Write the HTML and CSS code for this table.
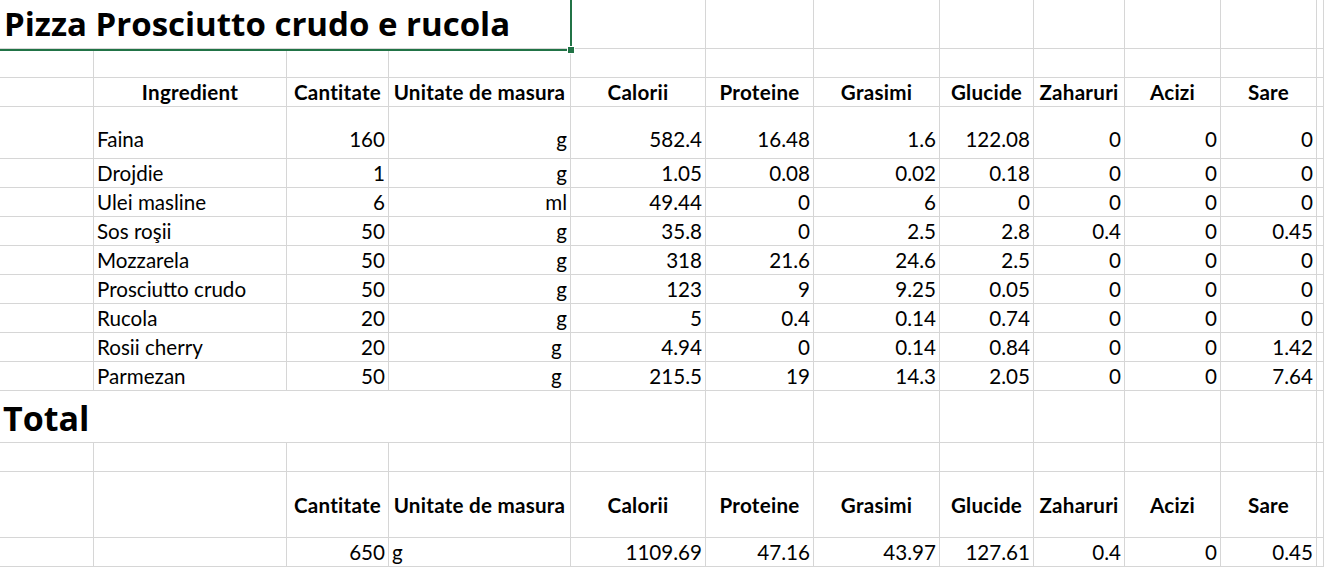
FILE: index.html
```html
<!DOCTYPE html>
<html lang="ro">
<head>
<meta charset="utf-8">
<title>Pizza Prosciutto crudo e rucola</title>
<link rel="stylesheet" href="styles.css">
</head>
<body>
<div class="sheet">
  <div class="row title-row">
    <div class="c span4 title">Pizza Prosciutto crudo e rucola</div>
    <div class="c"></div><div class="c"></div><div class="c"></div><div class="c"></div>
    <div class="c"></div><div class="c"></div><div class="c"></div><div class="c"></div>
  </div>
  <div class="row">
    <div class="c"></div><div class="c"></div><div class="c"></div><div class="c"></div>
    <div class="c"></div><div class="c"></div><div class="c"></div><div class="c"></div>
    <div class="c"></div><div class="c"></div><div class="c"></div><div class="c"></div>
  </div>
  <div class="row head">
    <div class="c"></div>
    <div class="c m">Ingredient</div>
    <div class="c m">Cantitate</div>
    <div class="c m">Unitate de masura</div>
    <div class="c m">Calorii</div>
    <div class="c m">Proteine</div>
    <div class="c m">Grasimi</div>
    <div class="c m">Glucide</div>
    <div class="c m">Zaharuri</div>
    <div class="c m">Acizi</div>
    <div class="c m">Sare</div>
    <div class="c"></div>
  </div>
  <div class="row tall">
    <div class="c"></div><div class="c">Faina</div><div class="c r">160</div><div class="c r">g</div>
    <div class="c r">582.4</div><div class="c r">16.48</div><div class="c r">1.6</div><div class="c r">122.08</div>
    <div class="c r">0</div><div class="c r">0</div><div class="c r">0</div><div class="c"></div>
  </div>
  <div class="row">
    <div class="c"></div><div class="c">Drojdie</div><div class="c r">1</div><div class="c r">g</div>
    <div class="c r">1.05</div><div class="c r">0.08</div><div class="c r">0.02</div><div class="c r">0.18</div>
    <div class="c r">0</div><div class="c r">0</div><div class="c r">0</div><div class="c"></div>
  </div>
  <div class="row">
    <div class="c"></div><div class="c">Ulei masline</div><div class="c r">6</div><div class="c r">ml</div>
    <div class="c r">49.44</div><div class="c r">0</div><div class="c r">6</div><div class="c r">0</div>
    <div class="c r">0</div><div class="c r">0</div><div class="c r">0</div><div class="c"></div>
  </div>
  <div class="row">
    <div class="c"></div><div class="c">Sos roşii</div><div class="c r">50</div><div class="c r">g</div>
    <div class="c r">35.8</div><div class="c r">0</div><div class="c r">2.5</div><div class="c r">2.8</div>
    <div class="c r">0.4</div><div class="c r">0</div><div class="c r">0.45</div><div class="c"></div>
  </div>
  <div class="row">
    <div class="c"></div><div class="c">Mozzarela</div><div class="c r">50</div><div class="c r">g</div>
    <div class="c r">318</div><div class="c r">21.6</div><div class="c r">24.6</div><div class="c r">2.5</div>
    <div class="c r">0</div><div class="c r">0</div><div class="c r">0</div><div class="c"></div>
  </div>
  <div class="row">
    <div class="c"></div><div class="c">Prosciutto crudo</div><div class="c r">50</div><div class="c r">g</div>
    <div class="c r">123</div><div class="c r">9</div><div class="c r">9.25</div><div class="c r">0.05</div>
    <div class="c r">0</div><div class="c r">0</div><div class="c r">0</div><div class="c"></div>
  </div>
  <div class="row">
    <div class="c"></div><div class="c">Rucola</div><div class="c r">20</div><div class="c r">g</div>
    <div class="c r">5</div><div class="c r">0.4</div><div class="c r">0.14</div><div class="c r">0.74</div>
    <div class="c r">0</div><div class="c r">0</div><div class="c r">0</div><div class="c"></div>
  </div>
  <div class="row">
    <div class="c"></div><div class="c">Rosii cherry</div><div class="c r">20</div><div class="c r">g&nbsp;</div>
    <div class="c r">4.94</div><div class="c r">0</div><div class="c r">0.14</div><div class="c r">0.84</div>
    <div class="c r">0</div><div class="c r">0</div><div class="c r">1.42</div><div class="c"></div>
  </div>
  <div class="row">
    <div class="c"></div><div class="c">Parmezan</div><div class="c r">50</div><div class="c r">g&nbsp;</div>
    <div class="c r">215.5</div><div class="c r">19</div><div class="c r">14.3</div><div class="c r">2.05</div>
    <div class="c r">0</div><div class="c r">0</div><div class="c r">7.64</div><div class="c"></div>
  </div>
  <div class="row total-row">
    <div class="c span4 total">Total</div>
    <div class="c"></div><div class="c"></div><div class="c"></div><div class="c"></div>
    <div class="c"></div><div class="c"></div><div class="c"></div><div class="c"></div>
  </div>
  <div class="row">
    <div class="c"></div><div class="c"></div><div class="c"></div><div class="c"></div>
    <div class="c"></div><div class="c"></div><div class="c"></div><div class="c"></div>
    <div class="c"></div><div class="c"></div><div class="c"></div><div class="c"></div>
  </div>
  <div class="row head2">
    <div class="c"></div>
    <div class="c"></div>
    <div class="c m">Cantitate</div>
    <div class="c m">Unitate de masura</div>
    <div class="c m">Calorii</div>
    <div class="c m">Proteine</div>
    <div class="c m">Grasimi</div>
    <div class="c m">Glucide</div>
    <div class="c m">Zaharuri</div>
    <div class="c m">Acizi</div>
    <div class="c m">Sare</div>
    <div class="c"></div>
  </div>
  <div class="row">
    <div class="c"></div><div class="c"></div><div class="c r">650</div><div class="c">g</div>
    <div class="c r">1109.69</div><div class="c r">47.16</div><div class="c r">43.97</div><div class="c r">127.61</div>
    <div class="c r">0.4</div><div class="c r">0</div><div class="c r">0.45</div><div class="c"></div>
  </div>
  <div class="selection"><span class="handle"></span></div>
</div>
</body>
</html>
```
FILE: styles.css
```css
html, body {
  margin: 0;
  padding: 0;
  background: #ffffff;
}

body {
  font-family: Lato, "Noto Sans", "Liberation Sans", sans-serif;
  color: #000000;
  overflow: hidden;
}

.sheet {
  position: relative;
  width: 1324px;
  height: 567px;
  display: grid;
  grid-template-columns: 94px 193px 102px 182px 135px 108px 126px 94px 91px 96px 96px 1fr;
  grid-template-rows: 49px 29px 29px 52px repeat(8, 29px) 52px 29px 66px 29px;
}

.row {
  display: contents;
}

.c {
  box-sizing: border-box;
  border-right: 1px solid #d6d6d6;
  border-bottom: 1px solid #d6d6d6;
  display: flex;
  align-items: flex-end;
  justify-content: flex-start;
  padding: 0 3px 4px 3px;
  font-size: 20.6px;
  line-height: 20px;
  white-space: nowrap;
  min-width: 0;
}

.r {
  justify-content: flex-end;
}

.m {
  justify-content: center;
  font-weight: 700;
  letter-spacing: 0.25px;
}

.span4 {
  grid-column: span 4;
}

.tall .c {
  padding-bottom: 9px;
}

.head2 .c {
  padding-bottom: 22px;
}

.title {
  font-family: "Open Sans", Lato, sans-serif;
  font-size: 33px;
  line-height: 33px;
  font-weight: 700;
  padding-bottom: 8px;
  padding-left: 4px;
}

.total {
  font-family: "Open Sans", Lato, sans-serif;
  font-size: 34px;
  line-height: 34px;
  font-weight: 700;
  padding-bottom: 7px;
  padding-left: 3px;
}

.selection {
  position: absolute;
  left: -4px;
  top: -4px;
  width: 572px;
  height: 51px;
  border: 2px solid #217346;
  box-sizing: content-box;
  pointer-events: none;
}

.handle {
  position: absolute;
  right: -5px;
  bottom: -5px;
  width: 6px;
  height: 6px;
  background: #217346;
  border: 1px solid #ffffff;
}
```
